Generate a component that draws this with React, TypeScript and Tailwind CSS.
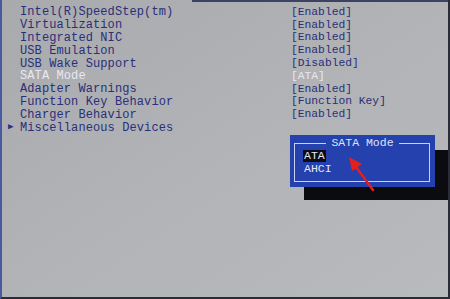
import React from "react";

const rows: { label: string; value: string; active?: boolean; sub?: boolean }[] = [
  { label: "Intel(R)SpeedStep(tm)", value: "[Enabled]" },
  { label: "Virtualization", value: "[Enabled]" },
  { label: "Integrated NIC", value: "[Enabled]" },
  { label: "USB Emulation", value: "[Enabled]" },
  { label: "USB Wake Support", value: "[Disabled]" },
  { label: "SATA Mode", value: "[ATA]", active: true },
  { label: "Adapter Warnings", value: "[Enabled]" },
  { label: "Function Key Behavior", value: "[Function Key]" },
  { label: "Charger Behavior", value: "[Enabled]" },
  { label: "Miscellaneous Devices", value: "", sub: true },
];

export default function App() {
  return (
    <div
      className="relative w-[450px] h-[299px] overflow-hidden bg-gradient-to-br from-[#a9aaae] via-[#b2b3b7] to-[#b9babe] border-l-[2px] border-l-[#4a5aa0] border-r-[2px] border-r-[#2a2c38] border-b-[2px] border-b-[#2a2c38]"
      style={{ fontFamily: '"Liberation Mono", "DejaVu Sans Mono", monospace' }}
    >
      {/* top rule */}
      <div className="absolute top-0 left-[190px] right-0 h-[2px] bg-[#3c4262]" />

      <div className="flex flex-col pt-[6px]">
        {rows.map((r) => (
          <div key={r.label} className="flex h-[12.8px] items-center leading-none">
            <div className="w-[6px]" />
            <div className="w-[12px] text-[9px] text-[#2c3383]">{r.sub ? "▶" : ""}</div>
            <div
              className={`w-[271px] text-[12px] tracking-[0.1px] ${
                r.active ? "text-[#e8e8f0]" : "text-[#2a2f78]"
              }`}
            >
              {r.label}
            </div>
            <div
              className={`text-[11.3px] ${r.active ? "text-[#e8e8f0]" : "text-[#2a2f78]"}`}
            >
              {r.value}
            </div>
          </div>
        ))}
      </div>

      {/* popup shadow */}
      <div className="absolute left-[302px] top-[150px] w-[144px] h-[50px] bg-[#0c0c10]" />

      {/* popup */}
      <div className="absolute left-[288px] top-[135px] w-[145px] h-[52px] bg-[#2441ad]">
        <div className="absolute left-[4px] top-[8px] right-[5px] bottom-[5px] border-[1.5px] border-[#c9d0f2]" />
        <div className="absolute left-0 right-0 top-[2px] flex justify-center">
          <span className="bg-[#2441ad] px-[5px] text-[11.5px] leading-[12px] text-[#dfe3f7]">
            SATA Mode
          </span>
        </div>
        <div className="absolute left-[14px] top-[15px] flex flex-col gap-[1px] text-[11.5px] leading-[12px] text-[#e6e8f6]">
          <span className="bg-[#0c0c16] px-[1px] -ml-[1px] w-fit">ATA</span>
          <span>AHCI</span>
        </div>
      </div>

      {/* red arrow */}
      <svg className="absolute left-0 top-0" width="450" height="299" viewBox="0 0 450 299">
        <line x1="371" y1="190" x2="354" y2="167" stroke="#e3201f" strokeWidth="2.5" strokeLinecap="round" />
        <polygon points="347,157 360,164 350,171" fill="#e3201f" />
      </svg>
    </div>
  );
}
